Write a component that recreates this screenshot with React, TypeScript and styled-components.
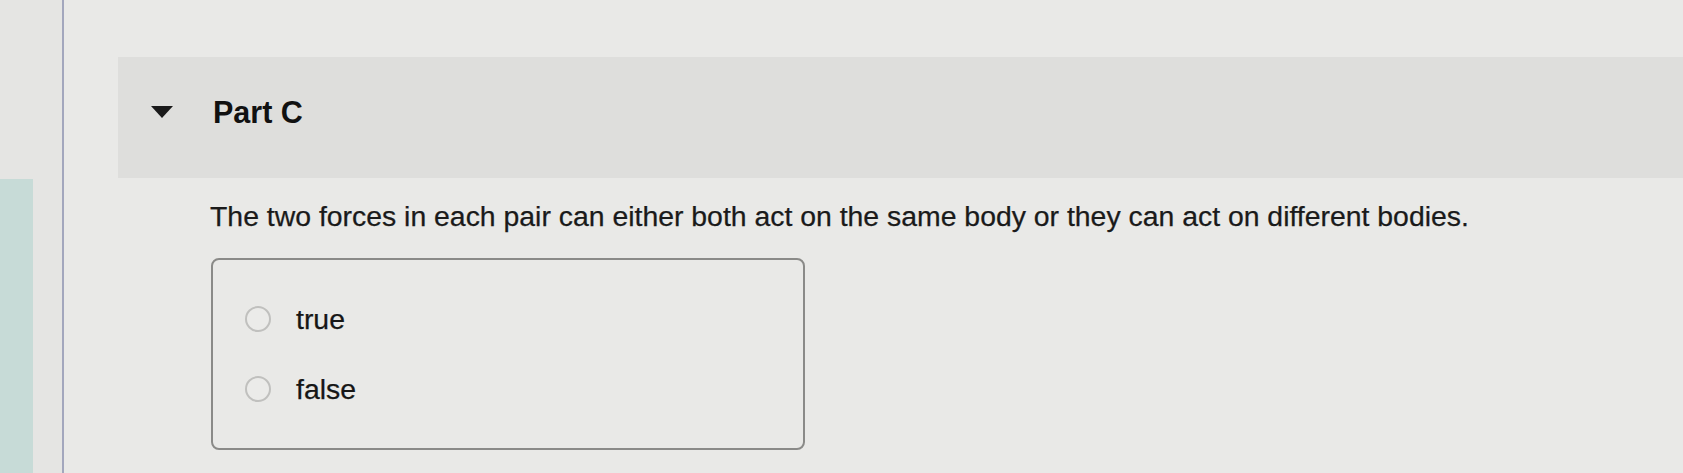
import React from "react";
import styled, { createGlobalStyle } from "styled-components";

const GlobalStyle = createGlobalStyle`
  html, body {
    margin: 0;
    padding: 0;
    background: #e8e8e5;
  }
  body {
    font-family: "Liberation Sans", Arial, Helvetica, sans-serif;
    color: #1e1e1e;
  }
  * { box-sizing: border-box; }
`;

const Page = styled.div`
  display: flex;
  height: 473px;
  overflow: hidden;
  background: #e9e9e7;
`;

const Rail = styled.aside`
  width: 62px;
  display: flex;
  flex-direction: column;
  background: #e5e5e3;
`;

const RailSpacer = styled.div`
  height: 179px;
`;

const RailAccent = styled.div`
  width: 33px;
  flex: 1;
  background: #c7dbd7;
`;

const Divider = styled.div`
  width: 2px;
  background: #a3a7bd;
`;

const Main = styled.main`
  flex: 1;
  padding: 57px 0 0 54px;
`;

const HeaderBand = styled.div`
  height: 121px;
  background: #dededc;
  padding: 37px 0 0 33px;
`;

const HeaderRow = styled.div`
  display: flex;
  align-items: center;
  gap: 40px;
  height: 36px;
`;

const Caret = styled.svg`
  width: 22px;
  height: 12px;
  flex: none;
`;

const PartTitle = styled.h2`
  margin: 0;
  font-size: 30.5px;
  line-height: 36px;
  font-weight: 700;
  color: #111111;
`;

const Body = styled.section`
  padding-left: 92px;
`;

const Question = styled.p`
  margin: 22px 0 0;
  font-size: 28.4px;
  line-height: 32px;
  color: #1a1a1a;
  -webkit-text-stroke: 0.25px #1a1a1a;
`;

const OptionsBox = styled.div`
  margin-top: 26px;
  margin-left: 1px;
  width: 594px;
  height: 192px;
  border: 2px solid #8a8a88;
  border-radius: 8px;
  padding: 24px 32px;
  display: flex;
  flex-direction: column;
`;

const Option = styled.label`
  height: 70px;
  display: flex;
  align-items: center;
  gap: 25px;
  font-size: 28.4px;
  line-height: 32px;
  color: #161616;
  -webkit-text-stroke: 0.25px #161616;
  cursor: pointer;
`;

const Radio = styled.span`
  width: 26px;
  height: 26px;
  border-radius: 50%;
  border: 2px solid #c0c0be;
  background: #ebebe9;
  flex: none;
`;

const options = ["true", "false"];

export default function App() {
  return (
    <>
      <GlobalStyle />
      <Page>
        <Rail>
          <RailSpacer />
          <RailAccent />
        </Rail>
        <Divider />
        <Main>
          <HeaderBand>
            <HeaderRow>
              <Caret viewBox="0 0 22 12">
                <polygon points="0,0 22,0 11,12" fill="#1a1a1a" />
              </Caret>
              <PartTitle>Part C</PartTitle>
            </HeaderRow>
          </HeaderBand>
          <Body>
            <Question>
              The two forces in each pair can either both act on the same body or they can act on different bodies.
            </Question>
            <OptionsBox>
              {options.map((o) => (
                <Option key={o}>
                  <Radio />
                  {o}
                </Option>
              ))}
            </OptionsBox>
          </Body>
        </Main>
      </Page>
    </>
  );
}
